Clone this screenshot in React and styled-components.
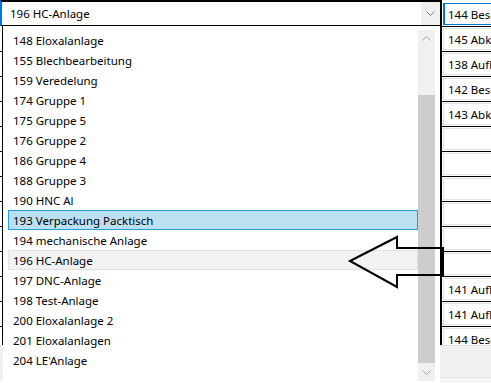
import React from "react";
import styled, { createGlobalStyle } from "styled-components";

const Global = createGlobalStyle`
  html, body { margin: 0; padding: 0; background: #fff; }
  body { font-family: "Noto Sans", "Open Sans", sans-serif; font-size: 11.5px; color: #000; }
`;

const Screen = styled.div`
  position: relative;
  width: 491px;
  height: 383px;
  overflow: hidden;
  background: #fff;
  display: flex;
  flex-direction: column;
`;

const GridBody = styled.div`
  display: flex;
  height: 345px;
  flex: none;
`;

const MainCol = styled.div`
  width: 440px;
  display: flex;
  flex-direction: column;
`;

const Combo = styled.div`
  height: 23px;
  border-top: 2px solid #000;
  border-bottom: 1px solid #000;
  border-left: 2px solid #0078d7;
  display: flex;
  align-items: center;
  background: #fff;
`;

const ComboText = styled.div`
  flex: 1;
  padding-left: 8px;
  white-space: nowrap;
`;

const ComboButton = styled.div`
  width: 19px;
  height: 100%;
  background: #f0f0f0;
  display: flex;
  align-items: center;
  justify-content: center;
`;

const Under = styled.div`
  flex: 1;
  display: flex;
`;

const Strip = styled.div`
  width: 2px;
  border-right: 1px solid #000;
  background: repeating-linear-gradient(
    to bottom,
    transparent 0px,
    transparent 24px,
    #000 24px,
    #000 25px
  );
  background-position: 0 1px;
`;

const VLine = styled.div`
  width: 2px;
  background: #000;
`;

const RightCol = styled.div`
  flex: 1;
  display: flex;
  flex-direction: column;
  padding-top: 2px;
  overflow: hidden;
`;

const Cell = styled.div`
  flex: none;
  height: 25px;
  box-sizing: border-box;
  border-bottom: 1px solid #000;
  display: flex;
  align-items: stretch;
  padding: 1px 0 1px 1px;
`;

const CellBox = styled.div`
  flex: 1;
  border: 1px solid ${(p) => (p.$focus ? "#0078d7" : "#e3e3e3")};
  border-left-width: ${(p) => (p.$focus ? "2px" : "1px")};
  border-right: none;
  padding-left: ${(p) => (p.$focus ? "3px" : "4px")};
  display: flex;
  align-items: center;
  white-space: nowrap;
  overflow: hidden;
`;

const Footer = styled.div`
  flex: 1;
  background: #f0f0f0;
  border-top: 1px solid #d8dfe4;
  display: flex;
  flex-direction: column;
  justify-content: flex-end;
`;

const FooterLine = styled.div`
  height: 5px;
  border-top: 1px solid #e3e3e3;
  background: #f7f7f7;
`;

const Popup = styled.div`
  position: absolute;
  left: 3px;
  top: 26px;
  width: 437px;
  height: 357px;
  background: #fff;
  display: flex;
  padding-top: 4px;
  box-sizing: border-box;
`;

const List = styled.div`
  width: 410px;
  margin-left: 5px;
  display: flex;
  flex-direction: column;
`;

const Item = styled.div`
  height: 20px;
  box-sizing: border-box;
  border: 1px solid
    ${(p) => (p.$selected ? "#26a0da" : p.$hover ? "#e2e2e2" : "transparent")};
  background: ${(p) => (p.$selected ? "#bce0f2" : p.$hover ? "#f2f2f2" : "transparent")};
  padding-left: 4px;
  display: flex;
  align-items: center;
  white-space: nowrap;
`;

const Scrollbar = styled.div`
  width: 17px;
  height: 351px;
  background: #f0f0f0;
  display: flex;
  flex-direction: column;
`;

const ScrollBtn = styled.div`
  height: 17px;
  flex: none;
  display: flex;
  align-items: center;
  justify-content: center;
`;

const Track = styled.div`
  flex: 1;
  display: flex;
  flex-direction: column;
`;

const Thumb = styled.div`
  margin-top: 48px;
  height: 268px;
  background: #cdcdcd;
`;

const Overlay = styled.svg`
  position: absolute;
  left: 0;
  top: 0;
  pointer-events: none;
`;

const Chevron = ({ up, color = "#8a8a8a" }) => (
  <svg width="9" height="5" viewBox="0 0 9 5">
    <polyline
      points={up ? "0.5,4.5 4.5,0.5 8.5,4.5" : "0.5,0.5 4.5,4.5 8.5,0.5"}
      fill="none"
      stroke={color}
      strokeWidth="1"
    />
  </svg>
);

const items = [
  "148 Eloxalanlage",
  "155 Blechbearbeitung",
  "159 Veredelung",
  "174 Gruppe 1",
  "175 Gruppe 5",
  "176 Gruppe 2",
  "186 Gruppe 4",
  "188 Gruppe 3",
  "190 HNC Al",
  "193 Verpackung Packtisch",
  "194 mechanische Anlage",
  "196 HC-Anlage",
  "197 DNC-Anlage",
  "198 Test-Anlage",
  "200 Eloxalanlage 2",
  "201 Eloxalanlagen",
  "204 LE'Anlage",
];

const cells = [
  "144 Beschichtung",
  "145 Abkanten",
  "138 Auflegen",
  "142 Beschichtung",
  "143 Abkanten",
  "",
  "",
  "",
  "",
  "",
  "",
  "141 Auflegen",
  "141 Auflegen",
  "144 Beschichtung",
];

export default function App() {
  return (
    <>
      <Global />
      <Screen>
        <GridBody>
          <MainCol>
            <Combo>
              <ComboText>196 HC-Anlage</ComboText>
              <ComboButton>
                <Chevron color="#7a7a7a" />
              </ComboButton>
            </Combo>
            <Under>
              <Strip />
            </Under>
          </MainCol>
          <VLine />
          <RightCol>
            {cells.map((c, i) => (
              <Cell key={i}>
                <CellBox $focus={i === 0}>{c}</CellBox>
              </Cell>
            ))}
          </RightCol>
        </GridBody>
        <Footer>
          <FooterLine />
        </Footer>

        <Popup>
          <List>
            {items.map((t) => (
              <Item
                key={t}
                $selected={t.startsWith("193")}
                $hover={t.startsWith("196")}
              >
                {t}
              </Item>
            ))}
          </List>
          <Scrollbar>
            <ScrollBtn>
              <Chevron up color="#a3a3a3" />
            </ScrollBtn>
            <Track>
              <Thumb />
            </Track>
            <ScrollBtn>
              <Chevron color="#a3a3a3" />
            </ScrollBtn>
          </Scrollbar>
        </Popup>

        <Overlay width="491" height="383" viewBox="0 0 491 383">
          <polygon
            points="350,261 397,237 397,248 442,248 442,275 397,275 397,287"
            fill="none"
            stroke="#000"
            strokeWidth="2"
            strokeLinejoin="miter"
          />
          <line x1="442.5" y1="247" x2="442.5" y2="276" stroke="#000" strokeWidth="3" />
        </Overlay>
      </Screen>
    </>
  );
}
